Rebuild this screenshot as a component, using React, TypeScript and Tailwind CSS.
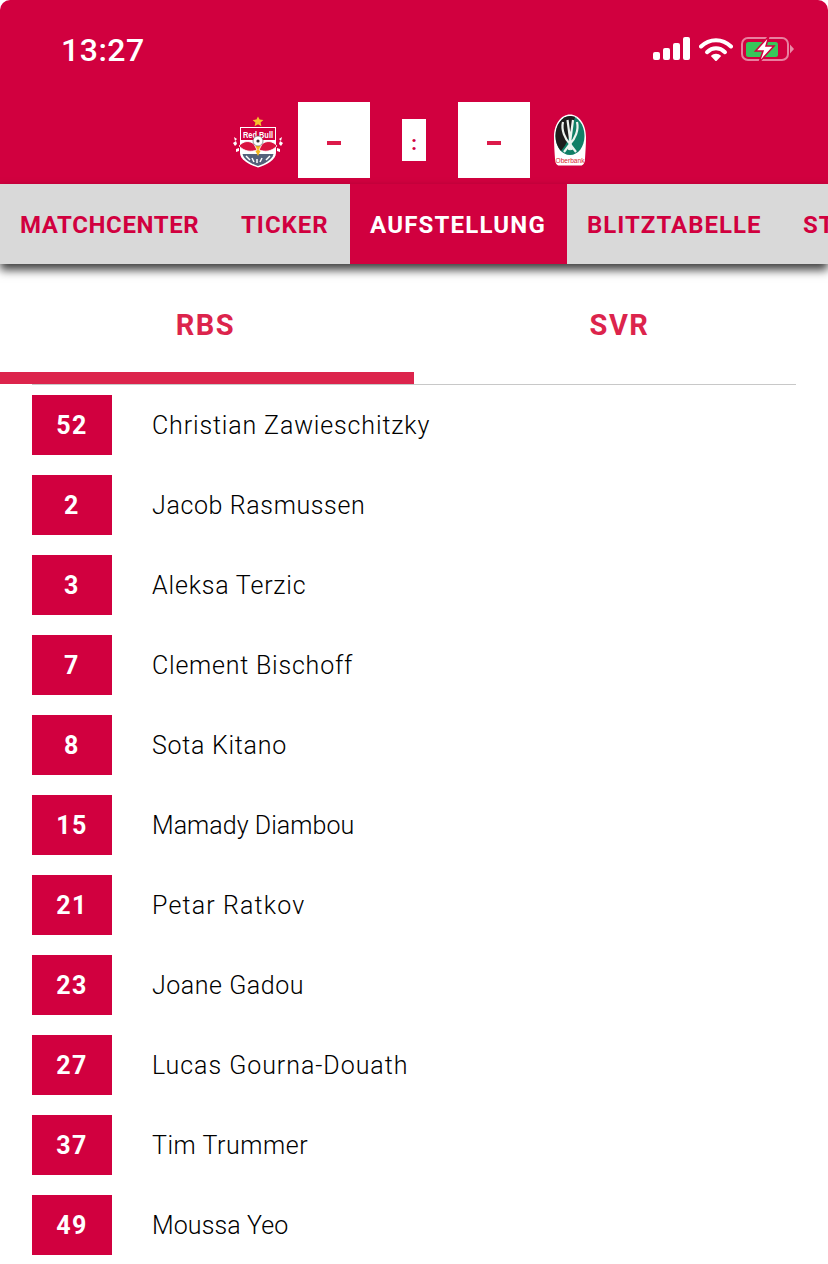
import React from 'react'

const PLAYERS = [
  { no: 52, name: 'Christian Zawieschitzky', ls: 'tracking-[0.85px]' },
  { no: 2, name: 'Jacob Rasmussen', ls: 'tracking-[0.63px]' },
  { no: 3, name: 'Aleksa Terzic', ls: 'tracking-[0.82px]' },
  { no: 7, name: 'Clement Bischoff', ls: 'tracking-[0.78px]' },
  { no: 8, name: 'Sota Kitano', ls: 'tracking-[0.72px]' },
  { no: 15, name: 'Mamady Diambou', ls: 'tracking-[0.04px]' },
  { no: 21, name: 'Petar Ratkov', ls: 'tracking-[1.15px]' },
  { no: 23, name: 'Joane Gadou', ls: 'tracking-[0.54px]' },
  { no: 27, name: 'Lucas Gourna-Douath', ls: 'tracking-[0.95px]' },
  { no: 37, name: 'Tim Trummer', ls: 'tracking-[0.54px]' },
  { no: 49, name: 'Moussa Yeo', ls: 'tracking-[0.1px]' },
]

function StatusIcons() {
  return (
    <div className="flex items-center">
      {/* signal */}
      <svg width="38" height="24" viewBox="0 0 38 24" className="mr-[8px]">
        <rect x="0" y="15" width="7" height="8" rx="2" fill="#fff" />
        <rect x="10" y="11" width="7" height="12" rx="2" fill="#fff" />
        <rect x="20" y="6" width="7" height="17" rx="2" fill="#fff" />
        <rect x="30" y="0" width="7" height="23" rx="2" fill="#fff" />
      </svg>
      {/* wifi */}
      <svg width="34" height="24" viewBox="0 0 34 24" className="mr-[8px]">
        <path d="M2 9.500C10.500 1 23.500 1 32 9.500" fill="none" stroke="#fff" strokeWidth="4" strokeLinecap="round" />
        <path d="M8 15.200C13.500 10 20.500 10 26 15.200" fill="none" stroke="#fff" strokeWidth="4" strokeLinecap="round" />
        <path d="M11.800 19C15 16 19 16 22.200 19L17 24.500Z" fill="#fff" />
      </svg>
      {/* battery charging */}
      <svg width="54" height="28" viewBox="0 0 54 28">
        <rect x="1" y="3" width="46" height="22" rx="6" fill="none" stroke="#fff" strokeOpacity="0.5" strokeWidth="2" />
        <rect x="5" y="7" width="32" height="15" rx="2.500" fill="#37c75a" />
        <path d="M49 9.500L53 14L49 18.500Z" fill="#fff" fillOpacity="0.55" />
        <path d="M28 1L14.500 16H22L18 27.500L33 11H25Z" fill="#fff" stroke="#d1003f" strokeWidth="1.500" />
      </svg>
    </div>
  )
}

function SalzburgCrest() {
  return (
    <svg width="50" height="52" viewBox="0 0 50 52" aria-hidden="true">
      <path d="M25 0.500L26.600 3.600L30.400 4L27.600 6.500L28.400 10.300L25 8.300L21.600 10.300L22.400 6.500L19.600 4L23.400 3.600Z" fill="#f6c22d" />
      <path d="M7 11H43V37C43 44 33 49 25 51.500C17 49 7 44 7 37Z" fill="#fff" />
      <path d="M8 12H42V24H8Z" fill="#d1003f" />
      <path d="M9.500 38H40.500C39 44 32 47.500 25 50C18 47.500 11 44 9.500 38Z" fill="#54607a" />
      <text x="25" y="21.500" textAnchor="middle" fontSize="9.500" fontWeight="700" fill="#fff" fontFamily="'Liberation Sans', sans-serif" textLength="30" lengthAdjust="spacingAndGlyphs">Red Bull</text>
      <path d="M20 30L25 40L30 30Z" fill="#f6b81f" />
      <path d="M6 30C10 25 16 24 21 28L24 34C18 36 12 36 6 30Z" fill="#d9123f" stroke="#fff" strokeWidth="0.800" />
      <path d="M44 30C40 25 34 24 29 28L26 34C32 36 38 36 44 30Z" fill="#d9123f" stroke="#fff" strokeWidth="0.800" />
      <circle cx="25" cy="25" r="5" fill="#fff" stroke="#555" strokeWidth="0.600" />
      <circle cx="25" cy="25" r="1.600" fill="#333" />
      <path d="M0 27L3 25L4 28L2 30ZM3 33L6 32L6 35L3 36ZM1 21L4 23L2 25ZM50 27L47 25L46 28L48 30ZM47 33L44 32L44 35L47 36ZM49 21L46 23L48 25Z" fill="#fff" />
      <path d="M13 40L17 44M19 42L21 46M24 43V47M29 42L27 46M37 40L33 44" stroke="#fff" strokeWidth="1.500" />
    </svg>
  )
}

function RiedCrest() {
  return (
    <svg width="34" height="52" viewBox="0 0 34 52" aria-hidden="true">
      <path d="M17 0.500C26 0.500 33 10 33 23C33 30 32.500 37 32 45C32 49 30 51.500 28 51.500H6C4 51.500 2 49 2 45C1.500 37 1 30 1 23C1 10 8 0.500 17 0.500Z" fill="#fff" />
      <path d="M17 2C25 2 31.500 11 31.500 22C31.500 33 25 41 17 41C9 41 2.500 33 2.500 22C2.500 11 9 2 17 2Z" fill="#117f66" />
      <path d="M17 2C9 2 2.500 11 2.500 22C2.500 28 4.500 33 8 37C12 32 16 28 22 2.800C20 2.300 18.500 2 17 2Z" fill="#1d1d1d" />
      <path d="M10 8C8 16 12 25 17 30L23 38M24 8C26 16 22 25 17 30L11 38M14.500 6L18.500 36M20 6L16 36" fill="none" stroke="#eef4f0" strokeWidth="2.200" />
      <text x="17" y="49" textAnchor="middle" fontSize="7.500" fontWeight="400" fill="#d92430" fontFamily="'Liberation Sans', sans-serif" textLength="29" lengthAdjust="spacingAndGlyphs">Oberbank</text>
    </svg>
  )
}

function MinusBox() {
  return (
    <div className="w-[72px] h-[76px] bg-white flex items-center justify-center pt-[5px]">
      <div className="w-[14px] h-[4px] bg-[#dc1a4a]" />
    </div>
  )
}

export default function App() {
  const font = { fontFamily: "Roboto, 'Liberation Sans', sans-serif" }

  return (
    <div className="w-[828px] h-[1264px] overflow-hidden bg-white" style={font}>
      <div className="h-[184px] bg-[#d1003f] rounded-t-[10px]">
        <div className="h-[102px] flex items-start justify-between pl-[61px] pr-[33px] pt-[33px]">
          <span className="text-[32px] leading-[34px] font-medium text-white tracking-[0.5px]">13:27</span>
          <div className="pt-[2px]">
            <StatusIcons />
          </div>
        </div>
        <div className="flex items-center h-[76px] pl-[233px]">
          <div className="w-[50px] h-[52px] mt-[4px]">
            <SalzburgCrest />
          </div>
          <div className="ml-[15px]">
            <MinusBox />
          </div>
          <div className="ml-[32px] w-[24px] h-[42px] bg-white flex items-center justify-center text-[#d1003f] text-[20px] leading-none font-bold pt-[6px]">:</div>
          <div className="ml-[32px]">
            <MinusBox />
          </div>
          <div className="ml-[23px] w-[34px] h-[52px]">
            <RiedCrest />
          </div>
        </div>
      </div>

      <div className="relative z-10 h-[80px] bg-[#d9d9d9] flex shadow-[0_6px_9px_rgba(0,0,0,0.75)] text-[24px] font-bold tracking-[1px] text-[#d1003f] overflow-hidden">
        <div className="w-[220px] shrink-0 pl-[20px] pt-[1px] flex items-center tracking-[0.6px]">MATCHCENTER</div>
        <div className="w-[130px] shrink-0 pl-[21px] pt-[1px] flex items-center">TICKER</div>
        <div className="w-[217px] shrink-0 pl-[20px] pt-[1px] flex items-center bg-[#d1003f] text-white tracking-[1.2px]">AUFSTELLUNG</div>
        <div className="w-[216px] shrink-0 pl-[20px] pt-[1px] flex items-center">BLITZTABELLE</div>
        <div className="shrink-0 pl-[20px] pt-[1px] flex items-center">STATISTIK</div>
      </div>

      <div className="flex h-[120px] text-[29px] font-bold tracking-[1.500px] text-[#dc244c]">
        <div className="w-[414px] flex flex-col">
          <div className="flex-1 flex items-center justify-center pr-[3px] pt-[15px]">RBS</div>
          <div className="h-[12px] bg-[#dc244c]" />
        </div>
        <div className="w-[414px] flex items-center justify-center pr-[3px] pt-[3px]">SVR</div>
      </div>

      <div className="mx-[32px] h-px bg-[#c8c8c8]" />

      <div className="flex flex-col gap-[20px] pt-[10px] pl-[32px]">
        {PLAYERS.map(p => (
          <div key={p.no} className="flex items-center h-[60px]">
            <div className="w-[80px] h-[60px] bg-[#d1003f] text-white flex items-center justify-center pt-[2px] text-[25px] font-bold tracking-[1.500px]">
              {p.no}
            </div>
            <span className={`ml-[40px] pt-[1px] text-[25px] font-light text-black ${p.ls}`}>{p.name}</span>
          </div>
        ))}
      </div>
    </div>
  )
}
